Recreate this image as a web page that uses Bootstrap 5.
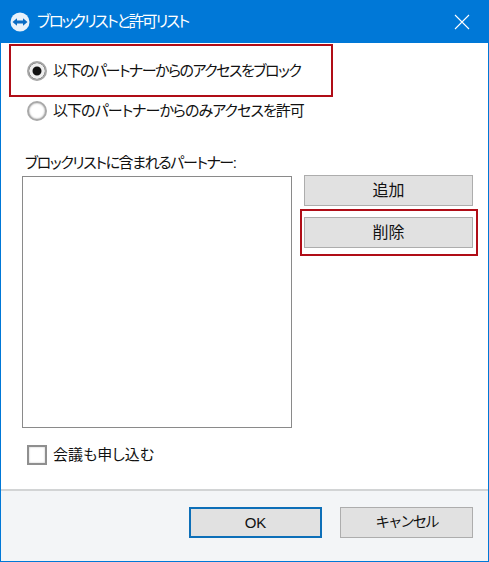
<!DOCTYPE html>
<html lang="ja">
<head>
<meta charset="utf-8">
<title>ブロックリストと許可リスト</title>
<link href="https://cdn.jsdelivr.net/npm/bootstrap@5.3.0/dist/css/bootstrap.min.css" rel="stylesheet">
<style>
html,body{height:562px;overflow:hidden;background:#fff}
body{font-family:"Liberation Sans","Noto Sans CJK JP",sans-serif;font-size:15px;line-height:20px;color:#111;font-feature-settings:"palt"}
.dlg{width:489px;height:562px;border:1px solid #0078d7;border-top:0}
.dlg-title{height:43px;background:#0078d7;color:#fff;font-size:15.5px;margin:0 -1px;padding:0 19px 0 10px;flex:none}
.dlg-title .ttl{letter-spacing:-1.95px;margin-left:-1px}
.dlg-main{padding:1px 15px 0 8px}
.hl-row{width:324px;height:53px;border:2px solid #b00d17;padding-left:16px;margin-bottom:4px;padding-top:1px}
.plain-row{height:20px;padding-left:18px}
.opt-txt{letter-spacing:-.95px;white-space:nowrap}
.hl-row .opt-txt{letter-spacing:-1.5px}
.rd{width:20px;height:20px;border-radius:50%;border:2px solid #a9a9a9;background:#fff;box-shadow:inset 0 0 2px #999;flex:none;margin-right:6px}
.rd-on{border-color:#a5a5a5;background:#111;box-shadow:inset 0 0 0 3.5px #eee}
.list-lbl{margin:32px 0 3px 16px;height:20px;letter-spacing:-1.4px;white-space:nowrap}
.lst{width:270px;height:252px;border:1px solid #8a8a8a;margin-left:13px;background:#fff;flex:none}
.side{width:178px;margin-left:12px;margin-top:-1px;flex:none}
.w-btn{display:block;width:169px;height:31px;padding:0;border:1px solid #adadad;border-radius:0;background:#e1e1e1;color:#111;font-size:16px;line-height:29px;text-align:center}
.btn-wrap{width:178px;height:47px;border:2px solid #b00d17;padding:6px 0 0 2px;margin:3px 0 0 -4px}
.chk-row{margin:17px 0 0 18px;height:20px}
.chk{width:20px;height:20px;border:2px solid #8f8f8f;background:#fff;box-shadow:inset 0 0 2px #bbb;flex:none;margin-right:6px}
.dlg-foot{height:72px;background:#f3f5f7;border-top:2px solid #d2d4d5;margin-top:24px;padding:16px 15px 0 0;flex:none}
.f-btn{width:133px;height:31px;padding:0;border:1px solid #adadad;border-radius:0;background:#e1e1e1;color:#111;font-size:15px;line-height:29px}
.f-def{border:2px solid #0d6fb8;line-height:27px;margin-right:18px}
.f-kana{font-size:14.5px;letter-spacing:-2.1px}
</style>
</head>
<body>
<div class="dlg d-flex flex-column">
  <div class="dlg-title d-flex align-items-center">
    <svg width="20" height="20" viewBox="0 0 20 20" class="me-2 flex-shrink-0" aria-hidden="true">
      <circle cx="10" cy="10" r="9.5" fill="#e8f2fb"/>
      <path d="M2.5 10 7 6.2V8.6H13V6.2L17.5 10 13 13.8V11.4H7V13.8Z" fill="#0a6cc4"/>
    </svg>
    <span class="flex-grow-1 ttl">ブロックリストと許可リスト</span>
    <svg width="16" height="16" viewBox="0 0 16 16" aria-hidden="true"><path d="M1 1 15 15M15 1 1 15" stroke="#fff" stroke-width="1.1" fill="none"/></svg>
  </div>
  <div class="dlg-main">
    <div class="hl-row d-flex align-items-center">
      <span class="rd rd-on"></span><span class="opt-txt">以下のパートナーからのアクセスをブロック</span>
    </div>
    <div class="plain-row d-flex align-items-center">
      <span class="rd"></span><span class="opt-txt">以下のパートナーからのみアクセスを許可</span>
    </div>
    <div class="list-lbl">ブロックリストに含まれるパートナー:</div>
    <div class="d-flex align-items-start">
      <div class="lst"></div>
      <div class="side">
        <button type="button" class="btn w-btn">追加</button>
        <div class="btn-wrap"><button type="button" class="btn w-btn">削除</button></div>
      </div>
    </div>
    <div class="chk-row d-flex align-items-center">
      <span class="chk"></span><span>会議も申し込む</span>
    </div>
  </div>
  <div class="dlg-foot d-flex justify-content-end align-items-start">
    <button type="button" class="btn f-btn f-def">OK</button>
    <button type="button" class="btn f-btn f-kana">キャンセル</button>
  </div>
</div>
<script src="https://cdn.jsdelivr.net/npm/bootstrap@5.3.0/dist/js/bootstrap.bundle.min.js"></script>
</body>
</html>
